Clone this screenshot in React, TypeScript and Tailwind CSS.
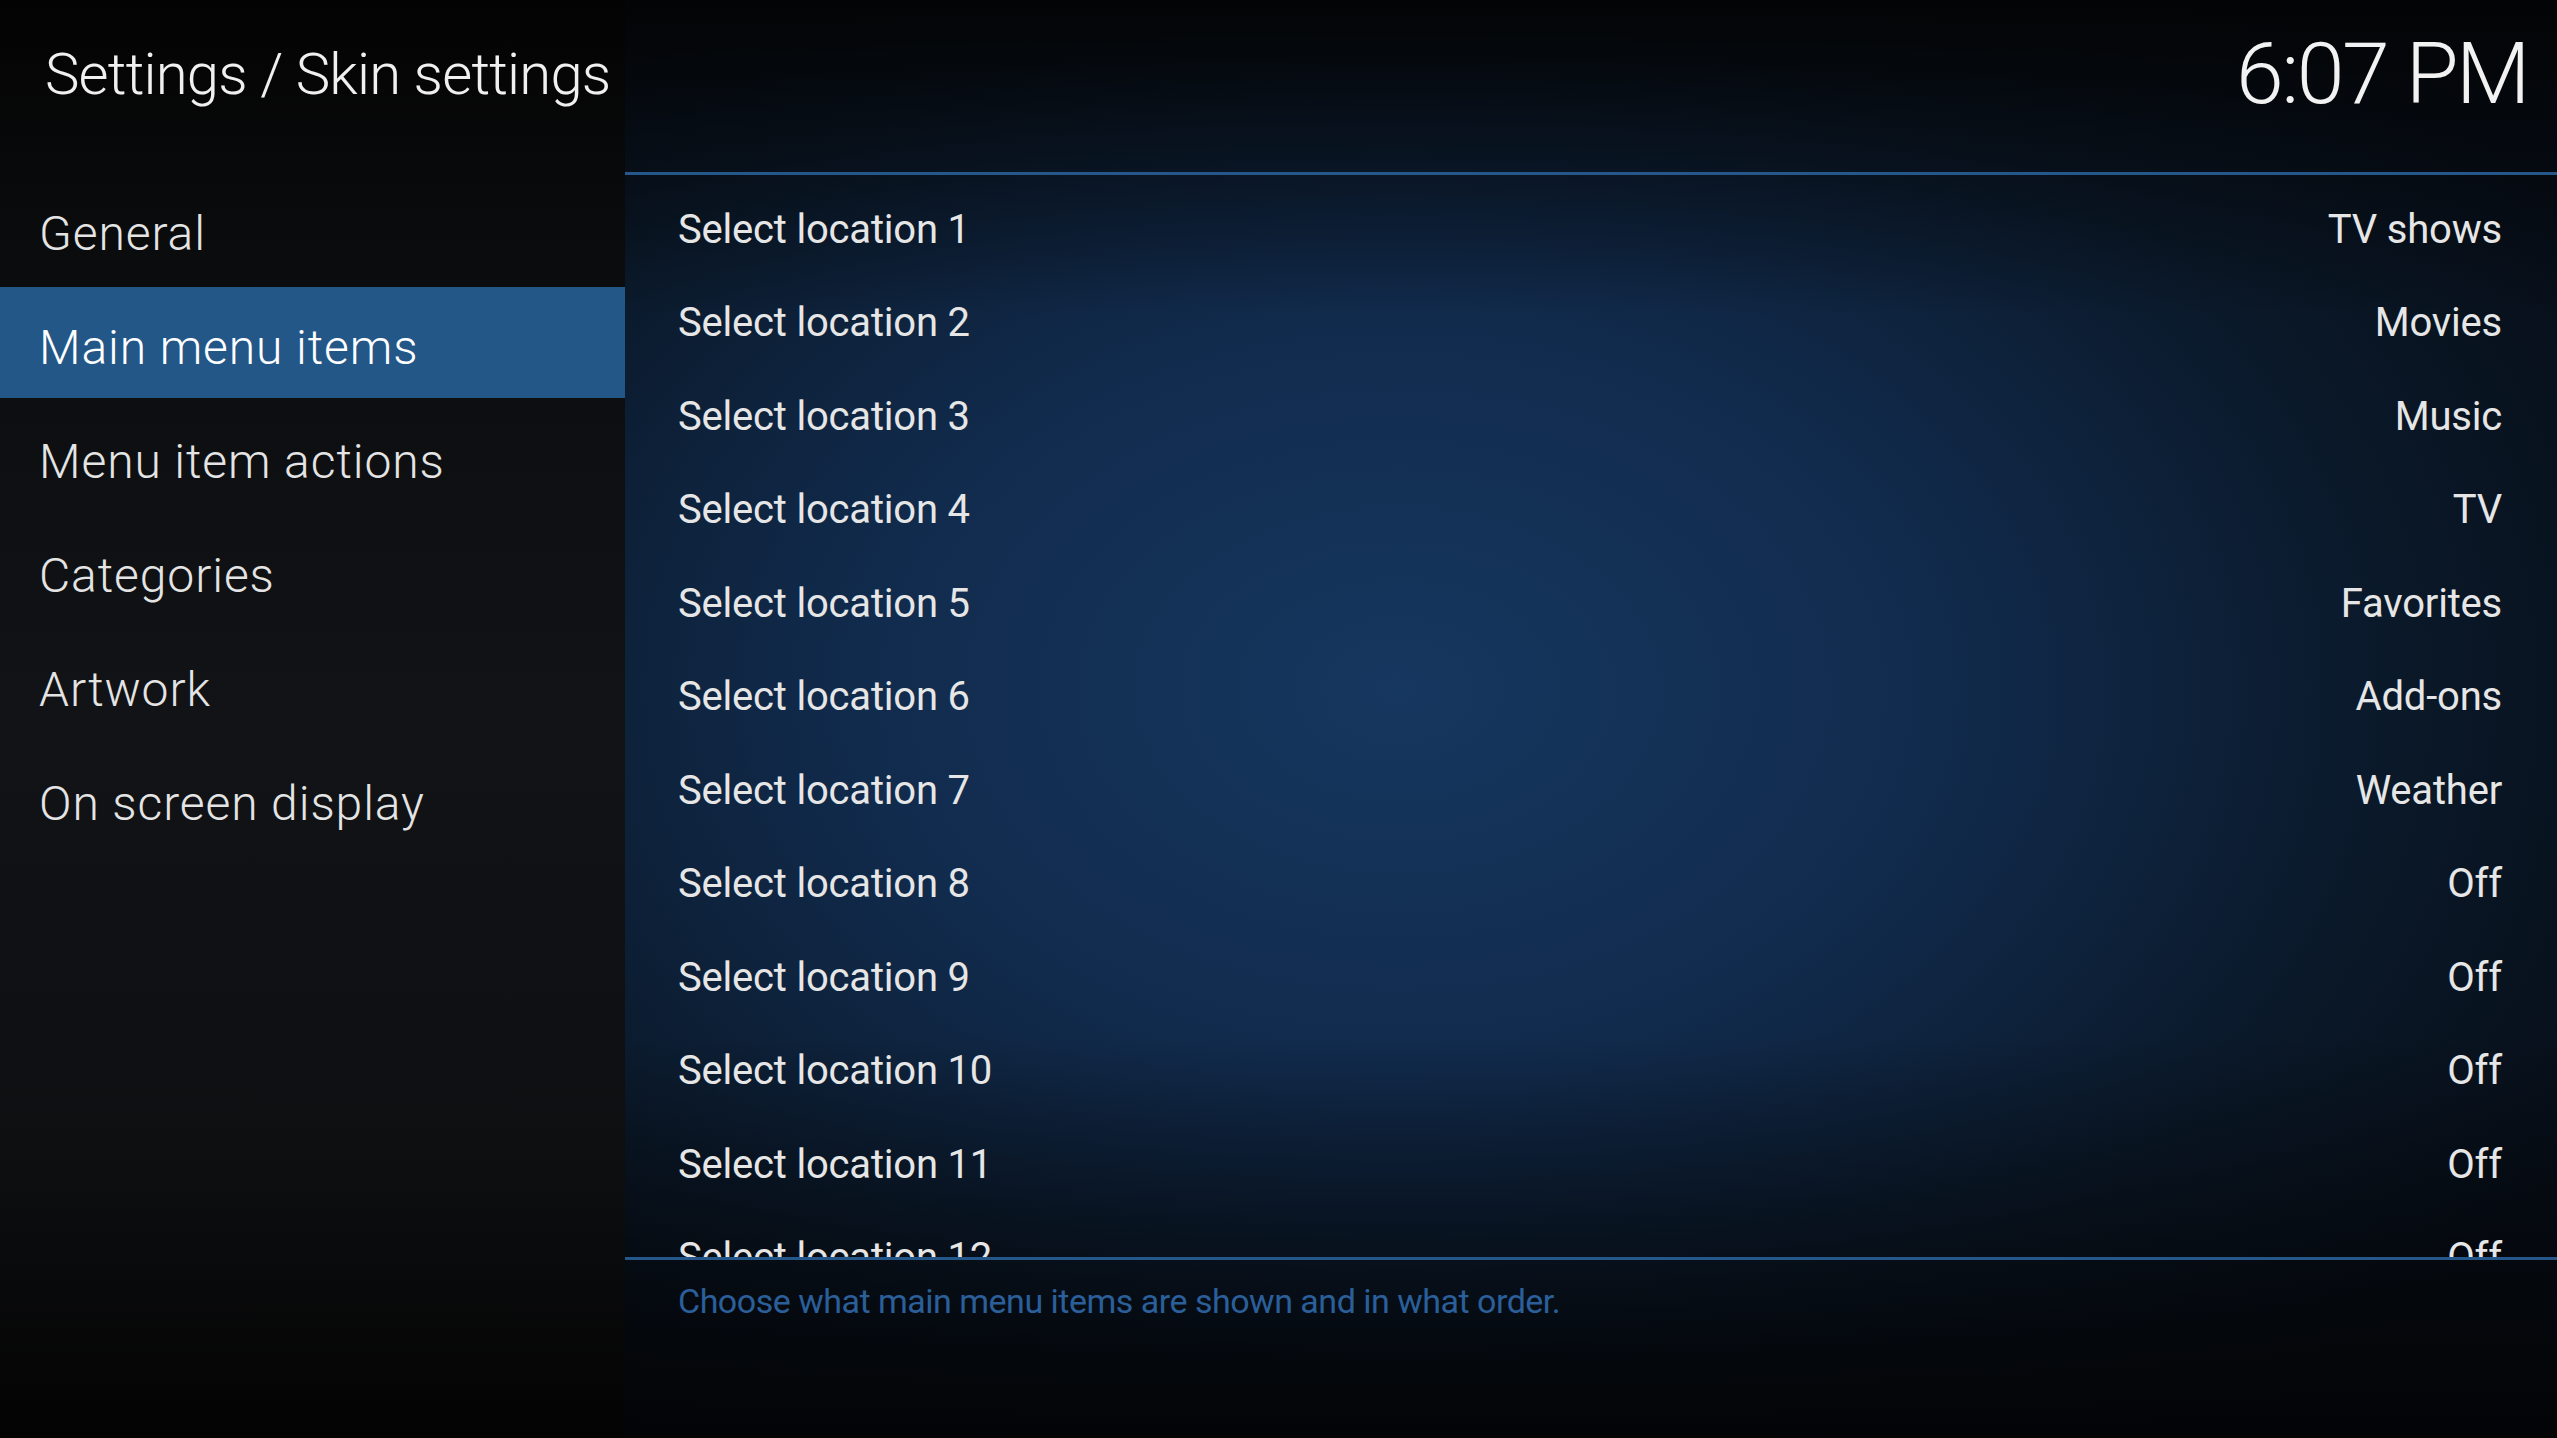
import React from 'react';

const sections = ['General', 'Main menu items', 'Menu item actions', 'Categories', 'Artwork', 'On screen display'];

const locations = [
  'TV shows',
  'Movies',
  'Music',
  'TV',
  'Favorites',
  'Add-ons',
  'Weather',
  'Off',
  'Off',
  'Off',
  'Off',
  'Off',
];

export default function App() {
  return (
    <div className="flex w-full h-[1438px] overflow-hidden font-['Roboto',sans-serif] text-[#e8e8e8] bg-[#050608]">
      {/* Sidebar */}
      <aside className="w-[625px] shrink-0 flex flex-col bg-[linear-gradient(to_bottom,#030303_0%,#0b0c0e_18%,#111316_50%,#0e0f11_80%,#030303_100%)]">
        <div className="h-[173px] pl-[45px] pt-[38px]">
          <h1 className="text-[58px] leading-[72px] font-light tracking-[-0.8px] text-[#f0f0f0] whitespace-nowrap">Settings / Skin settings</h1>
        </div>
        <nav className="flex flex-col gap-[3px]">
          {sections.map((s, i) => (
            <div
              key={s}
              className={
                'h-[111px] flex items-center pl-[39px] pt-[10px] text-[48px] font-light tracking-[0.9px] ' +
                (i === 1 ? 'bg-[#235788] text-white' : 'text-[#e4e4e4]')
              }
            >
              {s}
            </div>
          ))}
        </nav>
      </aside>

      {/* Main panel */}
      <main className="flex-1 flex flex-col bg-[linear-gradient(to_bottom,#030405_0%,rgba(3,4,6,0.55)_9%,rgba(3,4,6,0)_22%,rgba(3,4,6,0)_72%,rgba(3,4,6,0.7)_92%,#030406_100%),radial-gradient(ellipse_70%_65%_at_40%_48%,#16375f_0%,#112b4d_40%,#0a1828_75%,#070e18_100%)]">
        <header className="h-[172px] flex justify-end pr-[29px] pt-[24px]">
          <span className="text-[86px] leading-[100px] font-light tracking-[-2.5px] text-[#f2f2f2]">6:07 PM</span>
        </header>
        <div className="h-[3px] bg-[#25578a]" />

        <div className="h-[1082px] overflow-hidden pt-[8px] pl-[53px] pr-[55px]">
          {locations.map((v, i) => (
            <div key={i} className="h-[93.5px] flex items-center justify-between text-[40px] tracking-[-0.2px] text-[#e6e6e6]">
              <span>Select location {i + 1}</span>
              <span>{v}</span>
            </div>
          ))}
        </div>
        <div className="h-[3px] bg-[#25578a]" />

        <div className="pl-[53px] pt-[20px]">
          <p className="text-[34px] leading-[42px] tracking-[-0.5px] text-[#2a5f9a]">
            Choose what main menu items are shown and in what order.
          </p>
        </div>
      </main>
    </div>
  );
}
